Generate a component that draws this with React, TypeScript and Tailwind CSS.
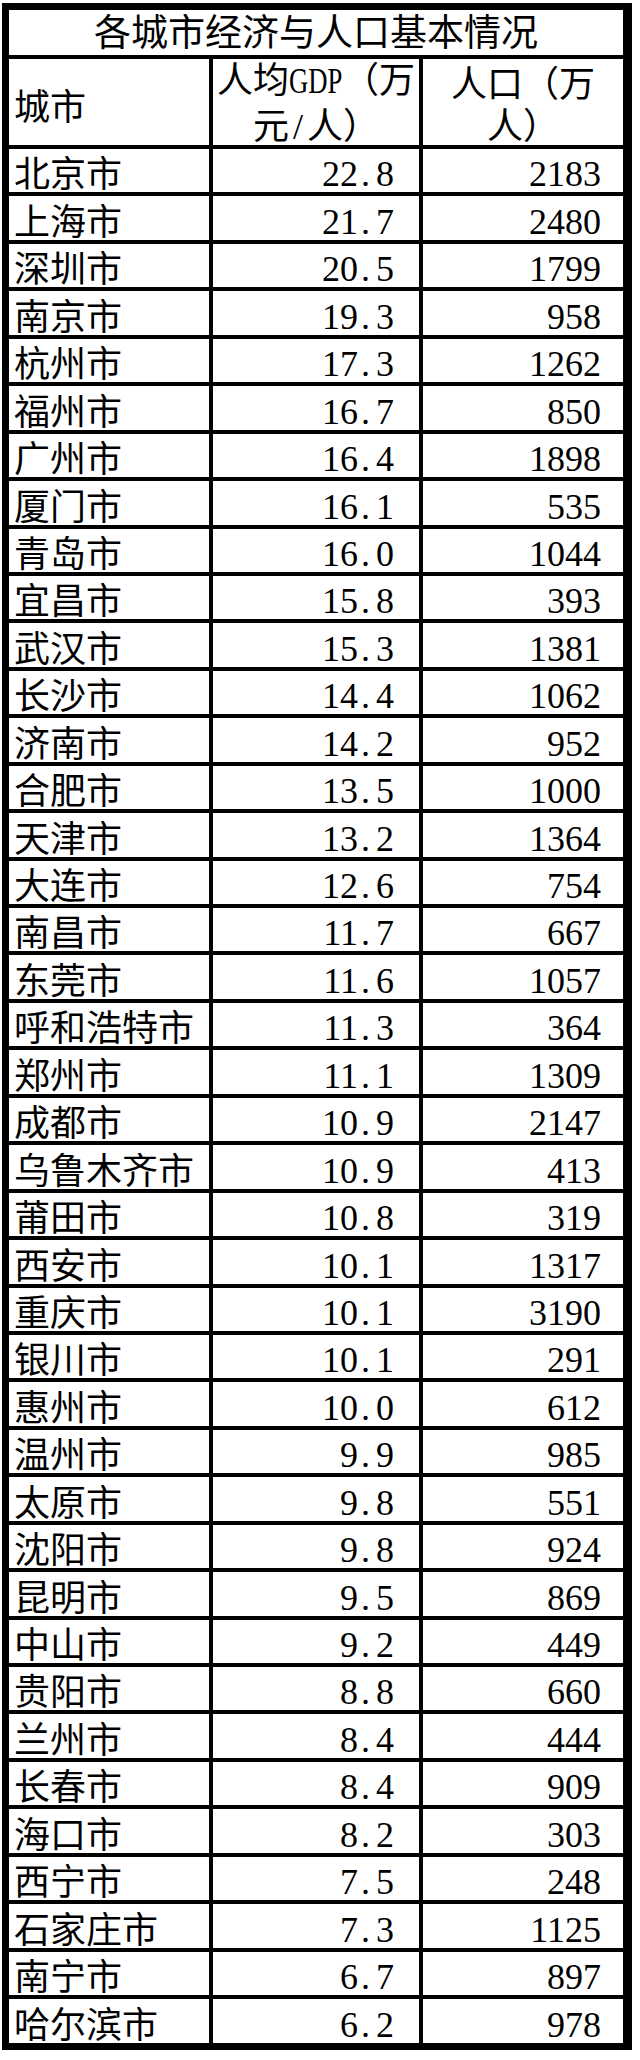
import React from 'react';

const rows: [string, string, string][] = [
  ['北京市', '22.8', '2183'],
  ['上海市', '21.7', '2480'],
  ['深圳市', '20.5', '1799'],
  ['南京市', '19.3', '958'],
  ['杭州市', '17.3', '1262'],
  ['福州市', '16.7', '850'],
  ['广州市', '16.4', '1898'],
  ['厦门市', '16.1', '535'],
  ['青岛市', '16.0', '1044'],
  ['宜昌市', '15.8', '393'],
  ['武汉市', '15.3', '1381'],
  ['长沙市', '14.4', '1062'],
  ['济南市', '14.2', '952'],
  ['合肥市', '13.5', '1000'],
  ['天津市', '13.2', '1364'],
  ['大连市', '12.6', '754'],
  ['南昌市', '11.7', '667'],
  ['东莞市', '11.6', '1057'],
  ['呼和浩特市', '11.3', '364'],
  ['郑州市', '11.1', '1309'],
  ['成都市', '10.9', '2147'],
  ['乌鲁木齐市', '10.9', '413'],
  ['莆田市', '10.8', '319'],
  ['西安市', '10.1', '1317'],
  ['重庆市', '10.1', '3190'],
  ['银川市', '10.1', '291'],
  ['惠州市', '10.0', '612'],
  ['温州市', '9.9', '985'],
  ['太原市', '9.8', '551'],
  ['沈阳市', '9.8', '924'],
  ['昆明市', '9.5', '869'],
  ['中山市', '9.2', '449'],
  ['贵阳市', '8.8', '660'],
  ['兰州市', '8.4', '444'],
  ['长春市', '8.4', '909'],
  ['海口市', '8.2', '303'],
  ['西宁市', '7.5', '248'],
  ['石家庄市', '7.3', '1125'],
  ['南宁市', '6.7', '897'],
  ['哈尔滨市', '6.2', '978'],
];

const cjk = "font-['Noto_Sans_CJK_SC',sans-serif]";
const serif = "font-['Liberation_Serif','Noto_Sans_CJK_SC',serif]";

// half-width numerals: the dot keeps a full digit cell, like the spreadsheet font
const Num = ({ value }: { value: string }) => (
  <span className={`${serif} text-[36px] leading-none whitespace-nowrap`}>
    {value.split('.').map((part, i) => (
      <React.Fragment key={i}>
        {i > 0 && <span className="inline-block w-[18px] pl-[3px]">.</span>}
        {part}
      </React.Fragment>
    ))}
  </span>
);

export default function App() {
  return (
    <div className="min-h-[2060px] w-[640px] bg-white text-black">
      <div className="ml-[2px] mt-[3px] w-[630px] border-y-[7px] border-l-[7px] border-r-[9px] border-black">
        {/* title */}
        <div className={`flex h-[45px] items-center justify-center pb-[4px] ${cjk} text-[37px] leading-none`}>
          各城市经济与人口基本情况
        </div>

        {/* header */}
        <div className="flex h-[90px] border-t-4 border-black">
          <div className={`flex w-[200px] items-center pl-[5px] pt-[3px] ${cjk} text-[36px] leading-none`}>城市</div>
          <div className={`flex w-[210px] flex-col items-center justify-center border-l-4 border-black ${cjk} text-[36px] leading-[42px]`}>
            <div className="whitespace-nowrap">
              人均
              <span className={`inline-block w-[54px] text-left ${serif}`}>
                <span className="inline-block origin-left scale-x-[0.74]">GDP</span>
              </span>
              （万
            </div>
            <div className="whitespace-nowrap">
              元<span className={`inline-block w-[18px] text-center ${serif}`}>/</span>人）
            </div>
          </div>
          <div className={`flex w-[204px] flex-col items-center justify-center border-l-4 border-black ${cjk} text-[36px] leading-[42px]`}>
            <div>人口（万</div>
            <div>人）</div>
          </div>
        </div>

        {/* data */}
        {rows.map(([city, gdp, pop]) => (
          <div key={city} className="flex h-[47.45px] border-t-4 border-black">
            <div className={`flex w-[200px] items-end pb-[3px] pl-[5px] ${cjk} text-[36px] leading-none whitespace-nowrap`}>
              {city}
            </div>
            <div className="flex w-[210px] items-end justify-end border-l-4 border-black pr-[25px]">
              <Num value={gdp} />
            </div>
            <div className="flex w-[204px] items-end justify-end border-l-4 border-black pr-[22px]">
              <Num value={pop} />
            </div>
          </div>
        ))}
      </div>
    </div>
  );
}
